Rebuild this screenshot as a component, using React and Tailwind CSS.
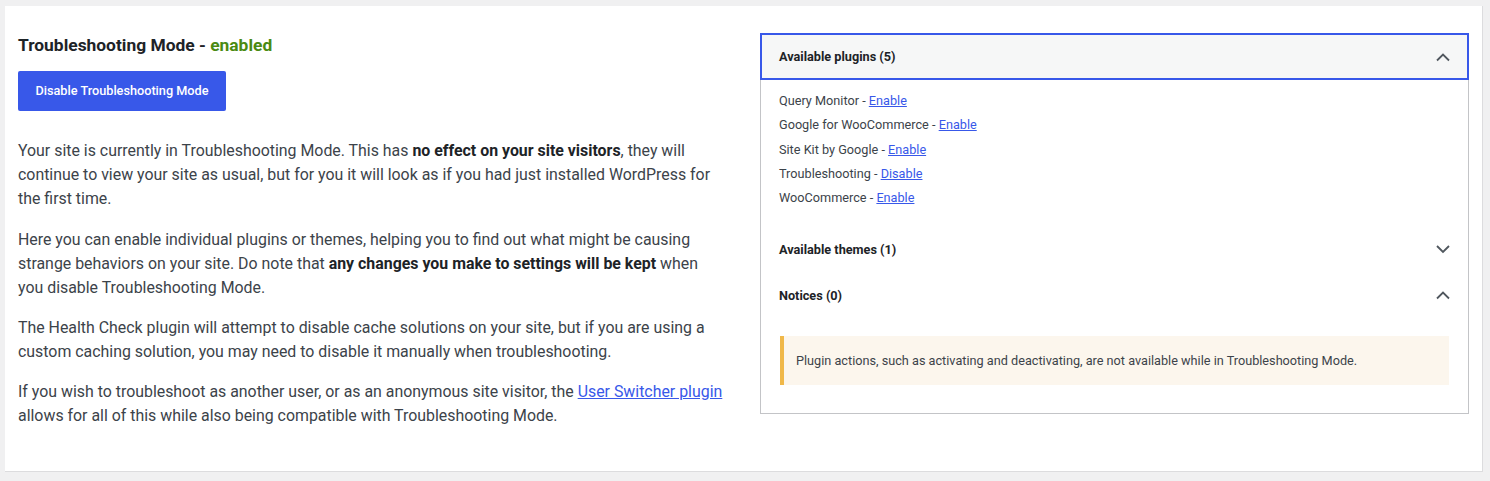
import React from "react";

const Chevron = ({ up }) => (
  <svg width="16" height="10" viewBox="0 0 16 10" fill="none" className="text-[#50575e]">
    <path
      d={up ? "M2 8.5 L8 2.5 L14 8.5" : "M2 2 L8 8 L14 2"}
      stroke="currentColor"
      strokeWidth="1.8"
    />
  </svg>
);

const plugins = [
  { name: "Query Monitor", action: "Enable" },
  { name: "Google for WooCommerce", action: "Enable" },
  { name: "Site Kit by Google", action: "Enable" },
  { name: "Troubleshooting", action: "Disable" },
  { name: "WooCommerce", action: "Enable" },
];

const App = () => {
  return (
    <div
      className="min-h-[481px] bg-[#f0f0f1] pt-[6px] pl-[5px] pr-[7px]"
      style={{ fontFamily: "Roboto, 'Liberation Sans', sans-serif" }}
    >
      <div className="bg-white border-b border-r border-[#dcdcde] pt-[27px] pb-[43px] pl-[13px] pr-[13px] flex gap-[36px]">
        {/* Left column */}
        <div className="w-[706px] shrink-0 text-[15.9px] leading-[24px] text-[#3c434a]">
          <h2 className="text-[17.4px] leading-[24px] font-bold text-[#1d2327]">
            Troubleshooting Mode - <span className="text-[#4a8a12]">enabled</span>
          </h2>
          <button className="mt-[14px] h-[40px] w-[208px] bg-[#3858e9] text-white text-[12.7px] font-medium rounded-[2px]">
            Disable Troubleshooting Mode
          </button>

          <p className="mt-[28px]">
            Your site is currently in Troubleshooting Mode. This has{" "}
            <strong className="text-[#1d2327]">no effect on your site visitors</strong>, they will
            continue to view your site as usual, but for you it will look as if you had just
            installed WordPress for the first time.
          </p>
          <p className="mt-[17px]">
            Here you can enable individual plugins or themes, helping you to find out what might be
            causing strange behaviors on your site. Do note that{" "}
            <strong className="text-[#1d2327]">any changes you make to settings will be kept</strong>{" "}
            when you disable Troubleshooting Mode.
          </p>
          <p className="mt-[16px]">
            The Health Check plugin will attempt to disable cache solutions on your site, but if you
            are using a custom caching solution, you may need to disable it manually when
            troubleshooting.
          </p>
          <p className="mt-[16px]">
            If you wish to troubleshoot as another user, or as an anonymous site visitor, the{" "}
            <a href="#" className="text-[#3858e9] underline">User Switcher plugin</a> allows for all
            of this while also being compatible with Troubleshooting Mode.
          </p>
        </div>

        {/* Right panel */}
        <div className="flex-1 self-start border border-[#c3c4c7] text-[12.7px] text-[#3c434a]">
          <div className="-m-px h-[47px] flex items-center justify-between bg-[#f6f7f7] border-2 border-[#3858e9] pl-[17px] pr-[16px]">
            <span className="font-bold text-[#1d2327]">Available plugins (5)</span>
            <Chevron up />
          </div>

          <ul className="pl-[18px] pt-[10px] pb-[16px]">
            {plugins.map((p) => (
              <li key={p.name} className="leading-[24.3px]">
                {p.name} -{" "}
                <a href="#" className="text-[#3858e9] underline">{p.action}</a>
              </li>
            ))}
          </ul>

          <div className="h-[46px] flex items-center justify-between pl-[18px] pr-[17px]">
            <span className="font-bold text-[#1d2327]">Available themes (1)</span>
            <Chevron />
          </div>
          <div className="h-[46px] flex items-center justify-between pl-[18px] pr-[17px]">
            <span className="font-bold text-[#1d2327]">Notices (0)</span>
            <Chevron up />
          </div>

          <div className="px-[19px] pt-[18px] pb-[28px]">
            <div className="h-[49px] flex items-center border-l-[4px] border-[#f0b849] bg-[#fcf6ed] pl-[12px]">
              Plugin actions, such as activating and deactivating, are not available while in
              Troubleshooting Mode.
            </div>
          </div>
        </div>
      </div>
    </div>
  );
};

export default App;
